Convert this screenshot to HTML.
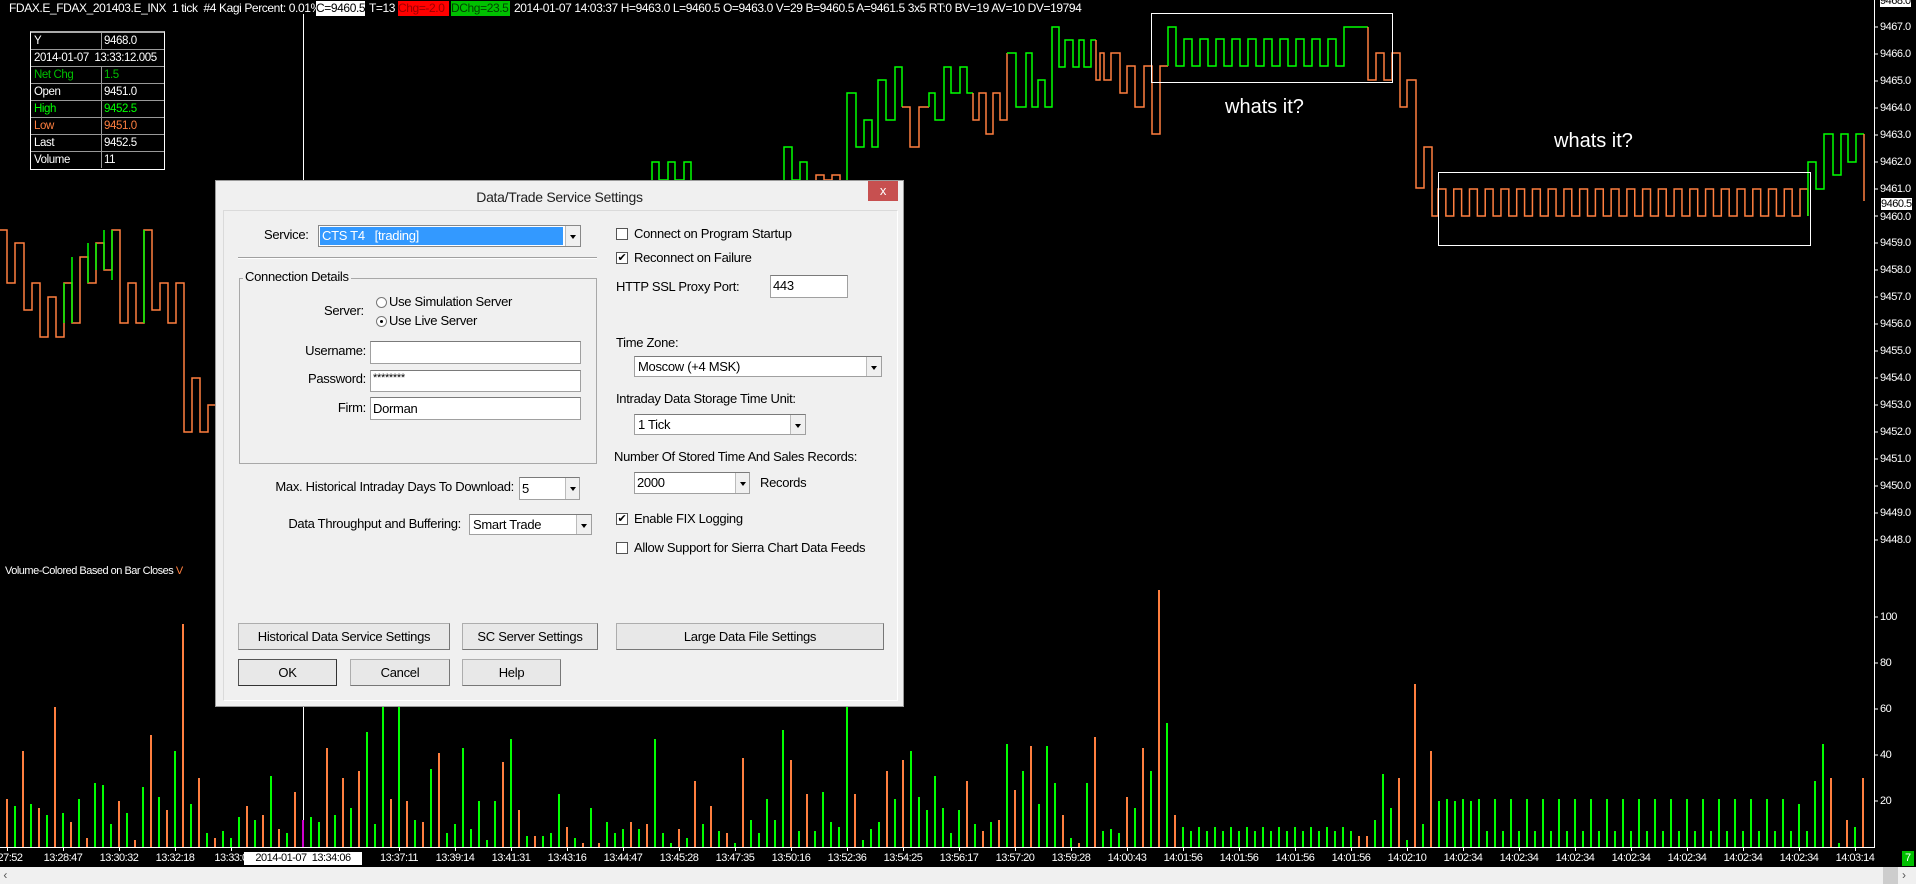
<!DOCTYPE html>
<html><head><meta charset="utf-8"><style>
*{margin:0;padding:0;box-sizing:border-box}
body{width:1916px;height:884px;background:#000;position:relative;overflow:hidden;font-family:"Liberation Sans",sans-serif;color:#fff}
.a{position:absolute;white-space:nowrap}
.hd{font-size:12px;letter-spacing:-0.4px;top:1px;height:15px;line-height:15px}
.tb{position:absolute;left:30px;top:31px;width:135px;border:1px solid #fff;border-top:2px solid #aaa;font-size:11.5px;letter-spacing:-0.4px}
.tb div{height:17px;border-bottom:1px solid #999;position:relative;line-height:16px}
.tb span{position:absolute;left:3px}
.tb b{font-weight:normal;position:absolute;left:70px;padding-left:2px;border-left:1px solid #999;height:16px}
.px{font-size:11px;letter-spacing:-0.5px;left:1880px;line-height:12px}
.tm{font-size:11px;letter-spacing:-0.5px;top:852px;line-height:13px;transform:translateX(-50%)}
.dlg{position:absolute;left:215px;top:180px;width:689px;height:527px;background:#f0f0f0;border:1px solid #9a9a9a;color:#000;font-size:13px;letter-spacing:-0.3px}
.dlg .a{line-height:16px}
.in{position:absolute;background:#fff;border:1px solid #a0a0a0;border-top-color:#7a7a7a}
.arr{position:absolute;right:0;top:0;bottom:0;width:15px;background:#f0f0f0;border-left:1px solid #bbb}
.arr:after{content:"";position:absolute;left:4px;top:9px;border:3px solid transparent;border-top:4px solid #000}
.btn{position:absolute;background:#e8e8e8;border:1px solid #adadad;border-right-color:#777;border-bottom-color:#777;text-align:center;line-height:25px;font-size:13px}
.cb{position:absolute;width:12px;height:12px;border:1px solid #555;background:#fff;font-size:11px;line-height:10px;text-align:center}
.rd{position:absolute;width:11px;height:11px;border:1px solid #777;border-radius:50%;background:#fff}
</style></head><body>

<div class="a hd" style="left:9px">FDAX.E_FDAX_201403.E_INX&nbsp; 1 tick&nbsp; #4 Kagi Percent: 0.01%</div>
<div class="a hd" style="left:316px;width:49px;background:#fff;color:#000;overflow:hidden">C=9460.5</div>
<div class="a hd" style="left:369px">T=13</div>
<div class="a hd" style="left:398px;width:51px;background:#f00;color:#900;overflow:hidden">Chg=-2.0</div>
<div class="a hd" style="left:451px;width:59px;background:#00c000;color:#040;overflow:hidden">DChg=23.5</div>
<div class="a hd" style="left:514px">2014-01-07 14:03:37 H=9463.0 L=9460.5 O=9463.0 V=29 B=9460.5 A=9461.5 3x5 RT:0 BV=19 AV=10 DV=19794</div>

<svg class="a" style="left:0;top:0" width="1916" height="884">
<line x1="303.5" y1="14" x2="303.5" y2="847" stroke="#fff" stroke-width="1"/>
<g fill="none" stroke-width="1.5">
<path stroke="#ff7f3f" d="M0 230H7V283H15V243H24V310H32V283H40V337H48V297H56V337H64V283H72V323H80V257H88V283H96V243H104V270H112V230H120V323H128V283H136V323H144V230H152V310H160V283H168V323H176V283H184V432H192V378H200V432H208V405H216V500"/>
<path stroke="#00ff00" d="M64 283V323M72 323V257M88 283V243M96 243V270M104 270V230M112 230V280M144 323V230"/>
<path stroke="#00ff00" d="M652 180V162H659V180H668V162H675V180H684V162H691V180M784 180V147H792V180H800V162H807V180"/>
<path stroke="#ff7f3f" d="M816 180V175H824V180H832V175H840V180"/>
<path stroke="#00ff00" d="M847 180V93H856V147H864V120H872V147H878V80H886V120H895V67H902V107"/>
<path stroke="#ff7f3f" d="M902 107H910V147H919V107H929"/>
<path stroke="#00ff00" d="M929 107V93H935V120H944V67H951V93H960V67H967V93H973"/>
<path stroke="#ff7f3f" d="M973 93V120H979V93H986V134H993V93H1000V120H1007V53"/>
<path stroke="#00ff00" d="M1007 53H1016V107H1026V53H1032V107H1038V80H1045V107H1052V27H1059V67H1065V40H1073V67H1079V40H1084V67H1091V40H1096"/>
<path stroke="#ff7f3f" d="M1096 40V80H1100V53H1104V80H1111V53H1120V93H1127V66H1135V107H1144V66H1152V134H1160V66H1168"/>
<path stroke="#00ff00" d="M1168 66V27H1176V66h8V39h8V66h8V39h8V66h8V39h8V66h8V39h8V66h8V39h8V66h8V39h8V66h8V39h8V66h8V39h8V66h8V39h8V66h8V39h8V66h8V27H1368"/>
<path stroke="#ff7f3f" d="M1368 27V80H1376V53H1384V80H1392V53H1400V107H1407V80H1416V188H1424V147H1432V216H1438V189h7.87V216h7.87V189h7.87V216h7.87V189h7.87V216h7.87V189h7.87V216h7.87V189h7.87V216h7.87V189h7.87V216h7.87V189h7.87V216h7.87V189h7.87V216h7.87V189h7.87V216h7.87V189h7.87V216h7.87V189h7.87V216h7.87V189h7.87V216h7.87V189h7.87V216h7.87V189h7.87V216h7.87V189h7.87V216h7.87V189h7.87V216h7.87V189h7.87V216h7.87V189h7.87V216h7.87V189h7.87V216h7.87V189h7.87V216h7.87V189h7.87V216h7.87V189h7.87V216h7.87V189h7.87V216h7.87V189h7.87V216"/>
<path stroke="#00ff00" d="M1808 216V162H1816V189H1824V134H1833V175H1841V134H1848V162H1856V134H1864"/>
<path stroke="#ff7f3f" d="M1864 134V201"/>
</g>
<rect x="1151.5" y="13.5" width="241" height="69" fill="none" stroke="#fff" stroke-width="1"/>
<rect x="1438.5" y="172.5" width="372" height="73" fill="none" stroke="#fff" stroke-width="1"/>
<text x="1225" y="113" fill="#fff" font-family="Liberation Sans" font-size="20">whats it?</text>
<text x="1554" y="147" fill="#fff" font-family="Liberation Sans" font-size="20">whats it?</text>
<g stroke-width="2">
<path stroke="#00ff00" d="M15 847V806M31 847V804M47 847V815M63 847V813M79 847V799M95 847V783M103 847V785M111 847V824M127 847V813M143 847V787M159 847V797M175 847V751M191 847V804M207 847V833M223 847V831M231 847V838M239 847V817M255 847V820M271 847V776M287 847V833M311 847V817M319 847V822M335 847V815M351 847V808M367 847V732M375 847V824M383 847V650M399 847V650M415 847V820M431 847V769M447 847V833M455 847V824M463 847V748M471 847V829M479 847V801M487 847V840M495 847V801M511 847V739M527 847V836M543 847V836M551 847V833M559 847V794M575 847V838M591 847V808M607 847V822M615 847V833M623 847V829M639 847V829M655 847V739M663 847V833M671 847V843M687 847V838M703 847V824M719 847V831M735 847V843M751 847V820M759 847V833M767 847V799M775 847V820M783 847V730M799 847V831M815 847V831M823 847V792M831 847V822M839 847V827M847 847V650M863 847V840M871 847V829M879 847V822M895 847V799M911 847V751M919 847V797M927 847V810M935 847V776M943 847V808M951 847V833M959 847V810M975 847V824M991 847V822M1007 847V744M1023 847V771M1039 847V804M1047 847V746M1055 847V783M1071 847V838M1087 847V783M1103 847V831M1111 847V829M1119 847V833M1135 847V808M1151 847V771M1167 847V723M1183 847V827M1191 847V831M1199 847V827M1207 847V831M1215 847V827M1223 847V831M1231 847V827M1239 847V831M1247 847V827M1255 847V831M1263 847V827M1271 847V831M1279 847V827M1287 847V831M1295 847V827M1303 847V831M1311 847V827M1319 847V831M1327 847V827M1335 847V831M1343 847V827M1351 847V831M1375 847V820M1383 847V774M1391 847V808M1407 847V840M1423 847V824M1439 847V801M1447 847V799M1455 847V801M1463 847V799M1471 847V801M1479 847V799M1487 847V831M1495 847V799M1503 847V831M1511 847V799M1519 847V831M1527 847V799M1535 847V831M1543 847V799M1551 847V831M1559 847V799M1567 847V831M1575 847V799M1583 847V831M1591 847V799M1599 847V831M1607 847V799M1615 847V831M1623 847V799M1631 847V831M1639 847V799M1647 847V831M1655 847V799M1663 847V831M1671 847V799M1679 847V831M1687 847V799M1695 847V831M1703 847V799M1711 847V831M1719 847V799M1727 847V831M1735 847V799M1743 847V831M1751 847V799M1759 847V831M1767 847V799M1775 847V831M1783 847V799M1791 847V831M1799 847V804M1807 847V831M1815 847V781M1823 847V744M1839 847V843M1855 847V827"/>
<path stroke="#ff7f3f" d="M7 847V799M23 847V751M39 847V808M55 847V707M71 847V822M87 847V838M119 847V801M135 847V840M151 847V735M167 847V810M183 847V624M199 847V778M215 847V838M247 847V806M263 847V815M279 847V829M295 847V792M327 847V748M343 847V778M359 847V771M391 847V799M407 847V801M423 847V822M439 847V753M503 847V762M519 847V810M535 847V836M567 847V827M583 847V843M599 847V843M631 847V822M647 847V824M679 847V829M695 847V781M711 847V806M727 847V833M743 847V758M791 847V760M807 847V794M855 847V794M887 847V771M903 847V760M967 847V781M983 847V831M999 847V820M1015 847V790M1031 847V746M1063 847V815M1079 847V843M1095 847V737M1127 847V797M1143 847V748M1159 847V590M1175 847V815M1359 847V836M1367 847V836M1399 847V778M1415 847V684M1431 847V751M1831 847V778M1847 847V820M1863 847V778"/>
<path stroke="#d000d0" d="M303 847V820"/>
</g>
<line x1="1874.5" y1="0" x2="1874.5" y2="847" stroke="#fff"/>
<line x1="0" y1="847.5" x2="1875" y2="847.5" stroke="#fff"/>
<g stroke="#fff">
<path d="M1874 27H1878M1874 54H1878M1874 81H1878M1874 108H1878M1874 135H1878M1874 162H1878M1874 189H1878M1874 216H1878M1874 243H1878M1874 270H1878M1874 297H1878M1874 324H1878M1874 351H1878M1874 378H1878M1874 405H1878M1874 432H1878M1874 459H1878M1874 486H1878M1874 513H1878M1874 540H1878M1874 617H1878M1874 663H1878M1874 709H1878M1874 755H1878M1874 801H1878"/>
<path d="M7.5 847V851M63.5 847V851M119.5 847V851M175.5 847V851M231.5 847V851M399.5 847V851M455.5 847V851M511.5 847V851M567.5 847V851M623.5 847V851M679.5 847V851M735.5 847V851M791.5 847V851M847.5 847V851M903.5 847V851M959.5 847V851M1015.5 847V851M1071.5 847V851M1127.5 847V851M1183.5 847V851M1239.5 847V851M1295.5 847V851M1351.5 847V851M1407.5 847V851M1463.5 847V851M1519.5 847V851M1575.5 847V851M1631.5 847V851M1687.5 847V851M1743.5 847V851M1799.5 847V851M1855.5 847V851"/>
</g>
</svg>

<div class="tb">
<div><span>Y</span><b>9468.0</b></div>
<div><span>2014-01-07&nbsp; 13:33:12.005</span></div>
<div style="color:#00c000"><span>Net Chg</span><b>1.5</b></div>
<div><span>Open</span><b>9451.0</b></div>
<div style="color:#00ff00"><span>High</span><b>9452.5</b></div>
<div style="color:#ff7f3f"><span>Low</span><b>9451.0</b></div>
<div><span>Last</span><b>9452.5</b></div>
<div style="border-bottom:0"><span>Volume</span><b>11</b></div>
</div>

<div class="a px" style="top:-5px;background:#fff;color:#000">9468.0</div>
<div class="a px" style="top:21px">9467.0</div>
<div class="a px" style="top:48px">9466.0</div>
<div class="a px" style="top:75px">9465.0</div>
<div class="a px" style="top:102px">9464.0</div>
<div class="a px" style="top:129px">9463.0</div>
<div class="a px" style="top:156px">9462.0</div>
<div class="a px" style="top:183px">9461.0</div>
<div class="a px" style="top:197px;background:#fff;color:#000;border:1px solid #000">9460.5</div>
<div class="a px" style="top:211px">9460.0</div>
<div class="a px" style="top:237px">9459.0</div>
<div class="a px" style="top:264px">9458.0</div>
<div class="a px" style="top:291px">9457.0</div>
<div class="a px" style="top:318px">9456.0</div>
<div class="a px" style="top:345px">9455.0</div>
<div class="a px" style="top:372px">9454.0</div>
<div class="a px" style="top:399px">9453.0</div>
<div class="a px" style="top:426px">9452.0</div>
<div class="a px" style="top:453px">9451.0</div>
<div class="a px" style="top:480px">9450.0</div>
<div class="a px" style="top:507px">9449.0</div>
<div class="a px" style="top:534px">9448.0</div>
<div class="a px" style="top:611px">100</div>
<div class="a px" style="top:657px">80</div>
<div class="a px" style="top:703px">60</div>
<div class="a px" style="top:749px">40</div>
<div class="a px" style="top:795px">20</div>

<div class="a" style="left:5px;top:565px;font-size:11px;letter-spacing:-0.5px">Volume-Colored Based on Bar Closes <span style="color:#ff7f3f">V</span></div>

<div class="a tm" style="left:10px">27:52</div>
<div class="a tm" style="left:63px">13:28:47</div>
<div class="a tm" style="left:119px">13:30:32</div>
<div class="a tm" style="left:175px">13:32:18</div>
<div class="a tm" style="left:231px">13:33:0</div>
<div class="a tm" style="left:303px;background:#fff;color:#000;width:118px;text-align:center;padding:0 2px">2014-01-07&nbsp; 13:34:06</div>
<div class="a tm" style="left:399px">13:37:11</div>
<div class="a tm" style="left:455px">13:39:14</div>
<div class="a tm" style="left:511px">13:41:31</div>
<div class="a tm" style="left:567px">13:43:16</div>
<div class="a tm" style="left:623px">13:44:47</div>
<div class="a tm" style="left:679px">13:45:28</div>
<div class="a tm" style="left:735px">13:47:35</div>
<div class="a tm" style="left:791px">13:50:16</div>
<div class="a tm" style="left:847px">13:52:36</div>
<div class="a tm" style="left:903px">13:54:25</div>
<div class="a tm" style="left:959px">13:56:17</div>
<div class="a tm" style="left:1015px">13:57:20</div>
<div class="a tm" style="left:1071px">13:59:28</div>
<div class="a tm" style="left:1127px">14:00:43</div>
<div class="a tm" style="left:1183px">14:01:56</div>
<div class="a tm" style="left:1239px">14:01:56</div>
<div class="a tm" style="left:1295px">14:01:56</div>
<div class="a tm" style="left:1351px">14:01:56</div>
<div class="a tm" style="left:1407px">14:02:10</div>
<div class="a tm" style="left:1463px">14:02:34</div>
<div class="a tm" style="left:1519px">14:02:34</div>
<div class="a tm" style="left:1575px">14:02:34</div>
<div class="a tm" style="left:1631px">14:02:34</div>
<div class="a tm" style="left:1687px">14:02:34</div>
<div class="a tm" style="left:1743px">14:02:34</div>
<div class="a tm" style="left:1799px">14:02:34</div>
<div class="a tm" style="left:1855px">14:03:14</div>
<div class="a" style="left:1902px;top:851px;width:12px;height:15px;background:#00c000;color:#fff;font-size:11px;text-align:center;line-height:15px">7</div>

<div class="a" style="left:0;top:867px;width:1916px;height:17px;background:#f0f0f0;color:#555;font-size:12px;line-height:17px">&nbsp;‹</div>
<div class="a" style="left:1883px;top:867px;width:15px;height:17px;background:#cdcdcd"></div>
<div class="a" style="left:1902px;top:867px;color:#555;font-size:12px;line-height:17px">›</div>

<div class="dlg">
<div class="a" style="left:0;width:687px;top:8px;text-align:center;font-size:14px;color:#222">Data/Trade Service Settings</div>
<div class="a" style="left:652px;top:0;width:30px;height:20px;background:#c75050;color:#fff;text-align:center;font-size:13px;line-height:19px">x</div>
<div class="a" style="left:7px;top:29px;width:675px;height:491px;border:1px solid #dadada;border-bottom-color:#fff;border-right-color:#fff"></div>

<div class="a" style="left:48px;top:46px">Service:</div>
<div class="in" style="left:102px;top:44px;width:263px;height:22px;border-color:#888"><div style="position:absolute;left:1px;top:1px;right:17px;bottom:1px;background:#3399ff;color:#fff;padding-left:2px;line-height:18px">CTS T4&nbsp;&nbsp; [trading]</div><div class="arr"></div></div>
<div class="a" style="left:22px;top:76px;width:359px;height:2px;border-top:1px solid #a0a0a0;border-bottom:1px solid #fff"></div>

<div class="a" style="left:23px;top:97px;width:358px;height:186px;border:1px solid #a8a8a8"></div>
<div class="a" style="left:27px;top:88px;background:#f0f0f0;padding:0 2px">Connection Details</div>
<div class="a" style="left:108px;top:122px">Server:</div>
<div class="rd" style="left:160px;top:116px"></div>
<div class="a" style="left:173px;top:113px">Use Simulation Server</div>
<div class="rd" style="left:160px;top:135px"><div style="position:absolute;left:3px;top:3px;width:3px;height:3px;background:#000;border-radius:50%"></div></div>
<div class="a" style="left:173px;top:132px">Use Live Server</div>
<div class="a" style="left:57px;top:162px;width:93px;text-align:right">Username:</div>
<div class="in" style="left:154px;top:160px;width:211px;height:23px"></div>
<div class="a" style="left:57px;top:190px;width:93px;text-align:right">Password:</div>
<div class="in" style="left:154px;top:189px;width:211px;height:22px;font-size:11px;padding-left:2px;line-height:14px">********</div>
<div class="a" style="left:57px;top:219px;width:93px;text-align:right">Firm:</div>
<div class="in" style="left:154px;top:216px;width:211px;height:23px;padding-left:2px;line-height:21px">Dorman</div>

<div class="a" style="left:20px;top:298px;width:278px;text-align:right">Max. Historical Intraday Days To Download:</div>
<div class="in" style="left:303px;top:296px;width:61px;height:23px;padding-left:2px;line-height:21px">5<div class="arr" style="width:14px"></div></div>
<div class="a" style="left:10px;top:335px;width:235px;text-align:right">Data Throughput and Buffering:</div>
<div class="in" style="left:253px;top:333px;width:123px;height:21px;padding-left:3px;line-height:19px">Smart Trade<div class="arr"></div></div>

<div class="cb" style="left:400px;top:47px"></div>
<div class="a" style="left:418px;top:45px">Connect on Program Startup</div>
<div class="cb" style="left:400px;top:71px">✔</div>
<div class="a" style="left:418px;top:69px">Reconnect on Failure</div>
<div class="a" style="left:400px;top:98px">HTTP SSL Proxy Port:</div>
<div class="in" style="left:554px;top:94px;width:78px;height:23px;padding-left:2px;line-height:19px">443</div>
<div class="a" style="left:400px;top:154px">Time Zone:</div>
<div class="in" style="top:175px;width:248px;height:21px;left:418px;padding-left:3px;line-height:19px">Moscow (+4 MSK)<div class="arr"></div></div>
<div class="a" style="left:400px;top:210px">Intraday Data Storage Time Unit:</div>
<div class="in" style="left:418px;top:233px;width:172px;height:21px;padding-left:3px;line-height:19px">1 Tick<div class="arr"></div></div>
<div class="a" style="left:398px;top:268px">Number Of Stored Time And Sales Records:</div>
<div class="in" style="left:418px;top:291px;width:116px;height:22px;padding-left:2px;line-height:20px">2000<div class="arr" style="width:14px"></div></div>
<div class="a" style="left:544px;top:294px">Records</div>
<div class="cb" style="left:400px;top:332px">✔</div>
<div class="a" style="left:418px;top:330px">Enable FIX Logging</div>
<div class="cb" style="left:400px;top:361px"></div>
<div class="a" style="left:418px;top:359px">Allow Support for Sierra Chart Data Feeds</div>

<div class="btn" style="left:22px;top:442px;width:212px;height:27px">Historical Data Service Settings</div>
<div class="btn" style="left:246px;top:442px;width:136px;height:27px">SC Server Settings</div>
<div class="btn" style="left:400px;top:442px;width:268px;height:27px">Large Data File Settings</div>
<div class="btn" style="left:22px;top:478px;width:99px;height:27px;border:1px solid #555;border-right-color:#333;border-bottom-color:#333">OK</div>
<div class="btn" style="left:134px;top:478px;width:100px;height:27px">Cancel</div>
<div class="btn" style="left:246px;top:478px;width:99px;height:27px">Help</div>
</div>
</body></html>
